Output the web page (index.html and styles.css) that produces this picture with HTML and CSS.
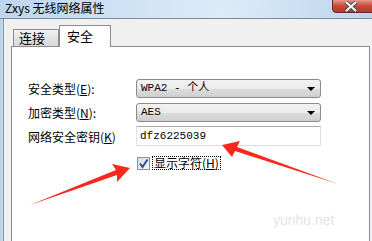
FILE: index.html
```html
<!DOCTYPE html>
<html lang="zh-CN">

<head>
    <meta charset="UTF-8">
    <title>Zxys 无线网络属性</title>
    <link rel="stylesheet" href="styles.css">
</head>

<body>
    <div class="window">
        <div class="titlebar">
            <span class="title">Zxys 无线网络属性</span>
            <a href="#" class="btn-close">
                <svg width="16" height="11" viewBox="0 0 16 11">
                    <path d="M3 1 L13 10 M13 1 L3 10" stroke="#4b4b57" stroke-width="4" />
                    <path d="M3 1 L13 10 M13 1 L3 10" stroke="#fff" stroke-width="2" />
                </svg>
            </a>
        </div>
        <div class="dialog">
            <div class="tabs">
                <div class="tab">连接</div>
                <div class="tab tab-active">安全</div>
            </div>
            <div class="panel">
                <div class="row">
                    <label class="row-label">安全类型(<u>E</u>):</label>
                    <div class="combo">WPA2 - 个人<span class="combo-arrow"></span></div>
                </div>
                <div class="row">
                    <label class="row-label">加密类型(<u>N</u>):</label>
                    <div class="combo">AES<span class="combo-arrow"></span></div>
                </div>
                <div class="row row-key">
                    <label class="row-label">网络安全密钥(<u>K</u>)</label>
                    <div class="textbox">dfz6225039</div>
                </div>
                <div class="check-row">
                    <span class="checkbox">
                        <svg width="11" height="11" viewBox="0 0 11 11">
                            <path d="M2 5.5 L4.5 9 L9.5 1.5" fill="none" stroke="#2f4797" stroke-width="2" />
                        </svg>
                    </span>
                    <span class="check-text">显示字符(<u>H</u>)</span>
                </div>
            </div>
        </div>
    </div>

    <div class="watermark">yunhu.net</div>

    <!-- 红色箭头 -->
    <svg class="arrows" width="372" height="241" viewBox="0 0 372 241">
        <polygon points="222,145 240,141 237,147 338,184 235,151 232,157" fill="#f8281c" />
        <polygon points="130,168 112,164 116,170 30,205 117,175 117,182" fill="#f8281c" />
    </svg>
</body>

</html>
```

FILE: styles.css
```css
body {
    margin: 0;
    width: 372px;
    height: 241px;
    overflow: hidden;
    position: relative;
    font-family: "Noto Sans CJK SC", "Liberation Sans", sans-serif;
    font-size: 12px;
    color: #000;
}

.window {
    display: flex;
    flex-direction: column;
    height: 241px;
}

.titlebar {
    position: relative;
    height: 22px;
    border-bottom: 1px solid #7d8a98;
    background: linear-gradient(100deg, #bcd5ee 0%, #cde1f4 30%, #dcebf9 60%, #c8ddf2 85%, #bcd4ec 100%);
    display: flex;
    align-items: center;
}

.title {
    margin-left: 5px;
    margin-bottom: 2px;
    font-size: 12px;
    line-height: 16px;
}

.btn-close {
    position: absolute;
    left: 332px;
    top: -1px;
    width: 44px;
    height: 14px;
    border: 1px solid #6d2a22;
    border-radius: 0 0 0 4px;
    background: linear-gradient(#e39a8a, #c9483a 50%, #b8382a);
    display: flex;
    justify-content: center;
    align-items: center;
    box-sizing: border-box;
    padding-top: 1px;
}

.btn-close svg {
    margin-left: -6px;
}

.dialog {
    flex: 1;
    background-color: #f0f0f0;
    border-left: 1px solid #8593a3;
    margin-left: 3px;
    padding: 6px 2px 0 7px;
    position: relative;
}

.dialog::before {
    content: "";
    position: absolute;
    left: -4px;
    top: 0;
    bottom: 0;
    width: 3px;
    background: linear-gradient(90deg, #b4cde6, #c8dcf0);
}

.tabs {
    display: flex;
    align-items: flex-end;
    padding-left: 2px;
    height: 21px;
}

.tab {
    height: 17px;
    line-height: 16px;
    border: 1px solid #898c95;
    border-bottom: none;
    background: linear-gradient(#f3f3f3, #e3e3e3 50%, #d9d9d9);
    padding-left: 5px;
    box-sizing: border-box;
    width: 46px;
    font-size: 13px;
}

.tab-active {
    position: relative;
    z-index: 1;
    width: 52px;
    height: 22px;
    margin-bottom: -1px;
    background: #fff;
    padding-left: 7px;
    line-height: 19px;
}

.panel {
    background-color: #fff;
    border: 1px solid #898c95;
    height: 200px;
    padding: 31px 0 0 16px;
    box-sizing: border-box;
}

.row {
    display: flex;
    align-items: center;
    height: 20px;
    margin-bottom: 4px;
}

.row-key {
    margin-top: 2px;
    margin-bottom: 10px;
}

.row-label {
    width: 108px;
    flex-shrink: 0;
}

.combo {
    position: relative;
    width: 185px;
    height: 19px;
    box-sizing: border-box;
    border: 1px solid #8a8a8a;
    border-radius: 3px;
    background: linear-gradient(#f2f2f2, #ebebeb 50%, #dddddd 51%, #cfcfcf);
    font-family: "Liberation Mono", "Noto Sans CJK SC", monospace;
    font-size: 11px;
    line-height: 17px;
    padding-left: 4px;
}

.combo-arrow {
    position: absolute;
    right: 5px;
    top: 7px;
    border-left: 4px solid transparent;
    border-right: 4px solid transparent;
    border-top: 4px solid #000;
}

.textbox {
    width: 185px;
    height: 20px;
    box-sizing: border-box;
    border: 1px solid #dbdfe6;
    border-top-color: #abadb3;
    border-left-color: #e2e3ea;
    background-color: #fff;
    font-family: "Liberation Mono", monospace;
    font-size: 11px;
    line-height: 18px;
    padding-left: 3px;
}

.check-row {
    display: flex;
    align-items: center;
    margin-left: 109px;
}

.checkbox {
    width: 13px;
    height: 13px;
    box-sizing: border-box;
    border: 1px solid #8e8f8f;
    background: linear-gradient(135deg, #dcdcdc, #f6f6f6);
    display: flex;
    justify-content: center;
    align-items: center;
}

.check-text {
    margin-left: 2px;
    padding: 0 1px;
    border: 1px dotted #000;
    line-height: 12px;
}

.watermark {
    position: absolute;
    left: 273px;
    top: 212px;
    font-family: "Liberation Sans", sans-serif;
    font-size: 14px;
    color: #e4e4e4;
}

.arrows {
    position: absolute;
    left: 0;
    top: 0;
}
```
